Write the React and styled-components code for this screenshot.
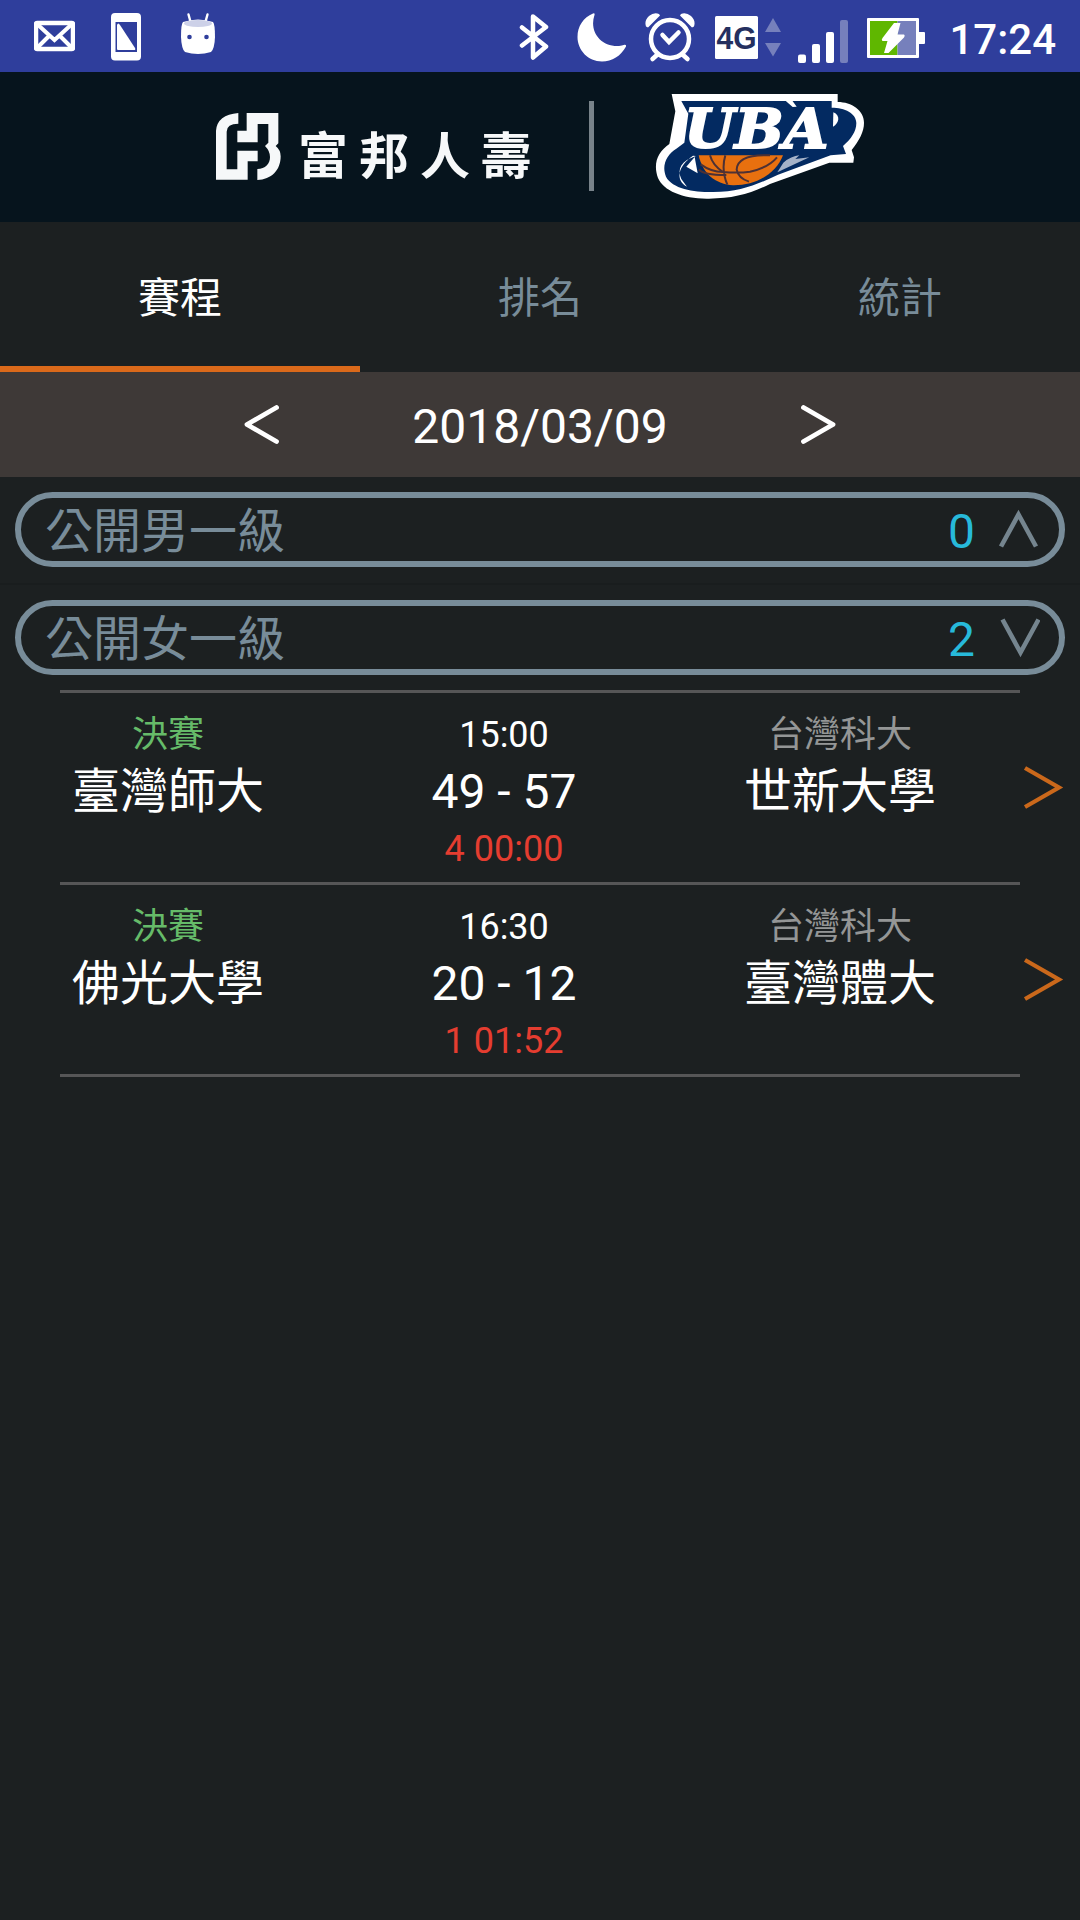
import React, { useState } from 'react';
import styled, { createGlobalStyle } from 'styled-components';

const GlobalStyle = createGlobalStyle`
  * {
    box-sizing: border-box;
  }

  body {
    margin: 0;
    background-color: #1c2021;
    font-family: Roboto, "Noto Sans CJK TC", sans-serif;
  }

  button {
    border: none;
    padding: 0;
    background: transparent;
    color: inherit;
    font-family: inherit;
    cursor: pointer;
  }

  svg {
    display: block;
    flex: none;
  }
`;

const Screen = styled.div`
  width: 1080px;
  height: 1920px;
  overflow: hidden;
  display: flex;
  flex-direction: column;
  background-color: #1c2021;
  color: #fff;
`;

const StatusBar = styled.div`
  height: 72px;
  padding: 0 24px 0 34px;
  display: flex;
  align-items: center;
  justify-content: space-between;
  background-color: #2f3e9c;
`;

const StatusGroup = styled.div`
  height: 72px;
  display: flex;
  align-items: center;
`;

const StatusIcon = styled.svg`
  height: 72px;
  margin-left: ${props => props.$gap || 0}px;
`;

const Clock = styled.span`
  margin-left: 24px;
  padding-top: 8px;
  font-size: 42px;
  font-weight: 500;
  line-height: 72px;
`;

const Header = styled.header`
  height: 150px;
  padding: 0 0 2px 216px;
  display: flex;
  align-items: center;
  background-color: #06141d;
`;

const Sponsor = styled.div`
  width: 373px;
  display: flex;
  align-items: center;
`;

const SponsorName = styled.span`
  margin-left: 17px;
  padding-top: 12px;
  font-family: "Noto Sans CJK TC", sans-serif;
  font-size: 50px;
  font-weight: 700;
  line-height: 60px;
  letter-spacing: 11px;
  white-space: nowrap;
  color: #f6f8f9;
`;

const HeaderDivider = styled.div`
  width: 5px;
  height: 90px;
  margin-right: 61px;
  background-color: #78838a;
`;

const Tabs = styled.nav`
  height: 150px;
  display: grid;
  grid-template-columns: repeat(3, 1fr);
`;

const Tab = styled.button`
  padding-bottom: 5px;
  border-top: 6px solid transparent;
  border-bottom: 6px solid ${props => (props.$active ? '#da691a' : 'transparent')};
  font-size: 42px;
  color: ${props => (props.$active ? '#fff' : '#788c99')};
`;

const DateBar = styled.div`
  height: 105px;
  display: flex;
  align-items: center;
  justify-content: center;
  background-color: #3e3937;
`;

const DateText = styled.span`
  width: 522px;
  padding-top: 3px;
  font-size: 48px;
  text-align: center;
`;

const Division = styled.section`
  padding: 15px 15px 0;
  height: ${props => (props.$last ? 'auto' : '108px')};
  border-bottom: ${props => (props.$last ? 'none' : '2px solid #191d1e')};
`;

const DivisionButton = styled.button`
  width: 100%;
  height: 75px;
  padding: 0 19px 0 24px;
  display: flex;
  align-items: center;
  border: 6px solid #788c99;
  border-radius: 38px;
  font-size: 48px;
  line-height: 63px;
  color: #788c99;
`;

const DivisionName = styled.span`
  padding-top: 4px;
`;

const Count = styled.span`
  margin-left: auto;
  margin-right: 23px;
  padding-top: 3px;
  color: #27b9da;
`;

const GameList = styled.div`
  margin: 15px 45px 0;
  border-top: 3px solid #565657;
`;

const GameRow = styled.div`
  height: 192px;
  padding-top: 18px;
  display: grid;
  grid-template-columns: 216px 456px 216px 1fr;
  border-bottom: 3px solid #565657;
  cursor: pointer;
`;

const GameColumn = styled.div`
  display: flex;
  flex-direction: column;
  align-items: center;
  white-space: nowrap;
`;

const Caption = styled.div`
  font-size: 36px;
  line-height: 48px;
  color: ${props => props.$color || '#fff'};
`;

const MainText = styled.div`
  font-size: 48px;
  line-height: 65px;
`;

const GameClock = styled.div`
  font-size: 36px;
  line-height: 50px;
  color: #e53d30;
`;

const ArrowCell = styled.div`
  padding: 52px 0 0 74px;
`;

const divisions = [
  { name: '公開男一級', open: false, games: [] },
  {
    name: '公開女一級',
    open: true,
    games: [
      { stage: '決賽', home: '臺灣師大', time: '15:00', score: '49 - 57', clock: '4 00:00', venue: '台灣科大', away: '世新大學' },
      { stage: '決賽', home: '佛光大學', time: '16:30', score: '20 - 12', clock: '1 01:52', venue: '台灣科大', away: '臺灣體大' },
    ],
  },
];

const MailIcon = () => (
  <StatusIcon width="41" viewBox="34 0 41 72" fill="none">
    <rect x="36" y="23" width="37" height="26" rx="1" stroke="#fff" strokeWidth="4.5" />
    <path d="M37 24l17.500 16L72 24M37 48l12-12M72 48L60 36" stroke="#fff" strokeWidth="4" />
  </StatusIcon>
);

const PhoneIcon = () => (
  <StatusIcon width="30" $gap={36} viewBox="111 0 30 72">
    <path fill="#fff" fillRule="evenodd" d="M115 13h22q4 0 4 4v39.500q0 4-4 4h-22q-4 0-4-4V17q0-4 4-4zM115.500 22v30H137V22z" />
    <path fill="#fff" d="M117 25q1-3 3 0l15 23q1 2-1 2h-16q-1 0-1-1z" />
  </StatusIcon>
);

const RobotIcon = () => (
  <StatusIcon width="34" $gap={40} viewBox="181 0 34 72">
    <path d="M188.500 14.500l2.500 9M207.500 14.500l-2.500 9" stroke="#fff" strokeWidth="2.400" strokeLinecap="round" />
    <path fill="#fff" d="M183 22Q198 17 213 22Q215 24 215 37Q214.500 49 211 52Q198 56 185 52Q181.500 49 181 37Q181 24 183 22z" />
    <ellipse cx="198" cy="23.500" rx="14" ry="3.500" fill="#cdd1e8" />
    <circle cx="189.500" cy="37" r="2.300" fill="#2f3e9c" />
    <circle cx="206.500" cy="37" r="2.300" fill="#2f3e9c" />
  </StatusIcon>
);

const BluetoothIcon = () => (
  <StatusIcon width="30" viewBox="519 0 30 72" fill="none">
    <path d="M522 27.500l24 19L533 57.500V16.500l13 10.500-24 18.500" stroke="#fff" strokeWidth="4.500" strokeLinejoin="round" strokeLinecap="round" />
  </StatusIcon>
);

const MoonIcon = () => (
  <StatusIcon width="49" $gap={28} viewBox="577 0 49 72">
    <path fill="#fff" d="M593 13.500Q595 12.500 594.500 15C589 31 600 47 619 46Q622 45.500 624.500 44.800Q626.500 44.500 626 46.500C621 56 612 61.500 602 61.500C588 61.500 577.500 50 577.500 37C577.500 26 583.500 17.500 593 13.500z" />
  </StatusIcon>
);

const AlarmIcon = () => (
  <StatusIcon width="50" $gap={19} viewBox="645 0 50 72" fill="none">
    <circle cx="670" cy="39" r="19" stroke="#fff" strokeWidth="4.500" />
    <path d="M662.500 35l6.500 7 9.500-9.500" stroke="#fff" strokeWidth="4.500" strokeLinecap="round" />
    <path d="M657.500 54.500l-5 4.500M682.500 54.500l5 4.500" stroke="#fff" strokeWidth="4.500" strokeLinecap="round" />
    <path fill="#fff" d="M646 26.500q-2-6 3-10.500 5-4 10-2l1 1.500-12 12zM694 26.500q2-6-3-10.500-5-4-10-2l-1 1.500 12 12z" />
  </StatusIcon>
);

const NetworkIcon = () => (
  <StatusIcon width="66" $gap={20} viewBox="715 0 66 72">
    <rect x="715" y="16" width="43" height="43" rx="1.500" fill="#fff" />
    <text x="736.500" y="48.500" textAnchor="middle" textLength="40" lengthAdjust="spacingAndGlyphs" fontFamily="Liberation Sans" fontWeight="700" fontSize="31" fill="#25305f">4G</text>
    <path fill="#7680bc" d="M773 18l8 14h-16zM773 56.500l8-13.500h-16z" />
  </StatusIcon>
);

const SignalIcon = () => (
  <StatusIcon width="50" $gap={17} viewBox="798 0 50 72" fill="#fff">
    <rect x="798" y="54.500" width="8" height="8.500" rx="2" />
    <rect x="812" y="44" width="8" height="19" rx="2" />
    <rect x="826" y="32" width="8" height="31" rx="2" />
    <rect x="840" y="20" width="8" height="43" rx="2" fill="#7680bc" />
  </StatusIcon>
);

const BatteryIcon = () => (
  <StatusIcon width="58" $gap={19} viewBox="867 0 58 72">
    <path fill="#fff" d="M868 18h50q1 0 1 1v13h5q1 0 1 1v10q0 1-1 1h-5v13q0 1-1 1h-50q-1 0-1-1V19q0-1 1-1z" />
    <rect x="870" y="21" width="27.500" height="34" fill="#5fb700" />
    <rect x="897.500" y="21" width="18.500" height="34" fill="#7680bc" />
    <path fill="#fff" d="M894 23h6.500l-3 11.500h6.500q1.500 1 0 3L888.500 53H884l3.500-12h-5q-1.500-1 0-3z" />
  </StatusIcon>
);

const FubonMark = () => (
  <svg width="65" height="67" viewBox="48 97 195 201" fill="#f6f8f9">
    <path d="M115 97v32q-35 0-35 24v113h32v-56h61v32h-30v55H48V150q4-48 67-53z" />
    <path d="M140 97h95v91l-8 8q15 12 15 31c0 42-28 70-70 71v-33c24-1 38-15 38-36q0-18-15-33l10-10v-56h-32v55h-61v-35h28z" />
  </svg>
);

const UbaLogo = () => (
  <svg width="210" height="107" viewBox="255 39 630 321">
    <path fill="#fff" d="M305 42h498v24c42 0 79 25 79 62 0 28-14 52-37 82l7 22-2 16h-72L600 312c-60 30-115 45-190 44-72 0-130-24-146-62-16-45 0-78 34-102l18-98z" />
    <path fill="#032a61" d="M334 63h451v20c39 0 74 17 74 46 0 26-16 48-40 69l9 24-46 4-158 58c-65 31-116 53-200 52-53 0-118-10-136-46-14-34 2-66 31-84l24-18 12-87z" />
    <path fill="#fff" d="M378 228c-43 14-58 37-44 69l17 23c-35-19-29-61 18-93z" />
    <path fill="#fff" d="M374 231l9 49-34-20z" />
    <path fill="#fff" d="M790 97c22 9 18 33-1 43z" />
    <path fill="#fff" d="M644 60l24 21 12-1-15-21z" />
    <path fill="#e8700f" d="M386 226h253c-20 55-82 91-150 90-52-3-91-34-103-90z" />
    <path fill="none" stroke="#4d3135" strokeWidth="6" d="M420 226q8 30 39 50 46 4 81-1 55-12 81-43M466 226q-13 42 6 88M392 253q30 22 67 23M600 226q-98-4-100 43 5 26 37 36M387 268q12 17 82 17" />
    <path fill="#a5b2c8" d="M640 248q24-20 48-22l-12 11 42-5-96 45z" />
    <text
      x="343"
      y="205"
      textLength="432"
      lengthAdjust="spacingAndGlyphs"
      fontFamily="DejaVu Serif"
      fontWeight="700"
      fontStyle="italic"
      fontSize="162"
      fill="#fff"
      stroke="#fff"
      strokeWidth="6"
    >
      UBA
    </text>
  </svg>
);

const DateArrow = ({ next }) => (
  <svg width="35" height="40" viewBox="0 0 35 40" fill="none">
    <path d={next ? 'M2.500 2.500L32 19.500 2.500 36.500' : 'M32.500 2.500L3 19.500 32.500 36.500'} stroke="#fff" strokeWidth="4.800" strokeLinecap="round" strokeLinejoin="round" />
  </svg>
);

const Chevron = ({ open }) => (
  <svg width="42" height="44" viewBox="0 0 42 44" fill="none">
    <path d={open ? 'M4.500 3.500l18 33 18-33' : 'M3 38.500L20.500 6.500 38 38.500'} stroke="#75858f" strokeWidth="4.600" />
  </svg>
);

const RowArrow = () => (
  <svg width="42" height="48" viewBox="0 0 42 48" fill="none">
    <path d="M3 5l34 19.500L3 44" stroke="#ca681b" strokeWidth="4.200" />
  </svg>
);

const Game = ({ game }) => (
  <GameRow>
    <GameColumn>
      <Caption $color="#66bb69">{game.stage}</Caption>
      <MainText>{game.home}</MainText>
    </GameColumn>
    <GameColumn>
      <Caption>{game.time}</Caption>
      <MainText>{game.score}</MainText>
      <GameClock>{game.clock}</GameClock>
    </GameColumn>
    <GameColumn>
      <Caption $color="#949696">{game.venue}</Caption>
      <MainText>{game.away}</MainText>
    </GameColumn>
    <ArrowCell>
      <RowArrow />
    </ArrowCell>
  </GameRow>
);

const App = () => {
  const [tab, setTab] = useState('賽程');
  const [opened, setOpened] = useState(divisions.map(d => d.open));

  const toggle = (index) => {
    setOpened(opened.map((value, i) => (i === index ? !value : value)));
  };

  return (
    <Screen>
      <GlobalStyle />
      <StatusBar>
        <StatusGroup>
          <MailIcon />
          <PhoneIcon />
          <RobotIcon />
        </StatusGroup>
        <StatusGroup>
          <BluetoothIcon />
          <MoonIcon />
          <AlarmIcon />
          <NetworkIcon />
          <SignalIcon />
          <BatteryIcon />
          <Clock>17:24</Clock>
        </StatusGroup>
      </StatusBar>
      <Header>
        <Sponsor>
          <FubonMark />
          <SponsorName>富邦人壽</SponsorName>
        </Sponsor>
        <HeaderDivider />
        <UbaLogo />
      </Header>
      <Tabs>
        {['賽程', '排名', '統計'].map(name => (
          <Tab key={name} $active={name === tab} onClick={() => setTab(name)}>{name}</Tab>
        ))}
      </Tabs>
      <DateBar>
        <button><DateArrow /></button>
        <DateText>2018/03/09</DateText>
        <button><DateArrow next /></button>
      </DateBar>
      {divisions.map((division, i) => (
        <Division key={division.name} $last={i === divisions.length - 1}>
          <DivisionButton onClick={() => toggle(i)}>
            <DivisionName>{division.name}</DivisionName>
            <Count>{division.games.length}</Count>
            <Chevron open={opened[i]} />
          </DivisionButton>
          {opened[i] && division.games.length > 0 && (
            <GameList>
              {division.games.map(game => <Game key={game.time} game={game} />)}
            </GameList>
          )}
        </Division>
      ))}
    </Screen>
  );
};

export default App;
